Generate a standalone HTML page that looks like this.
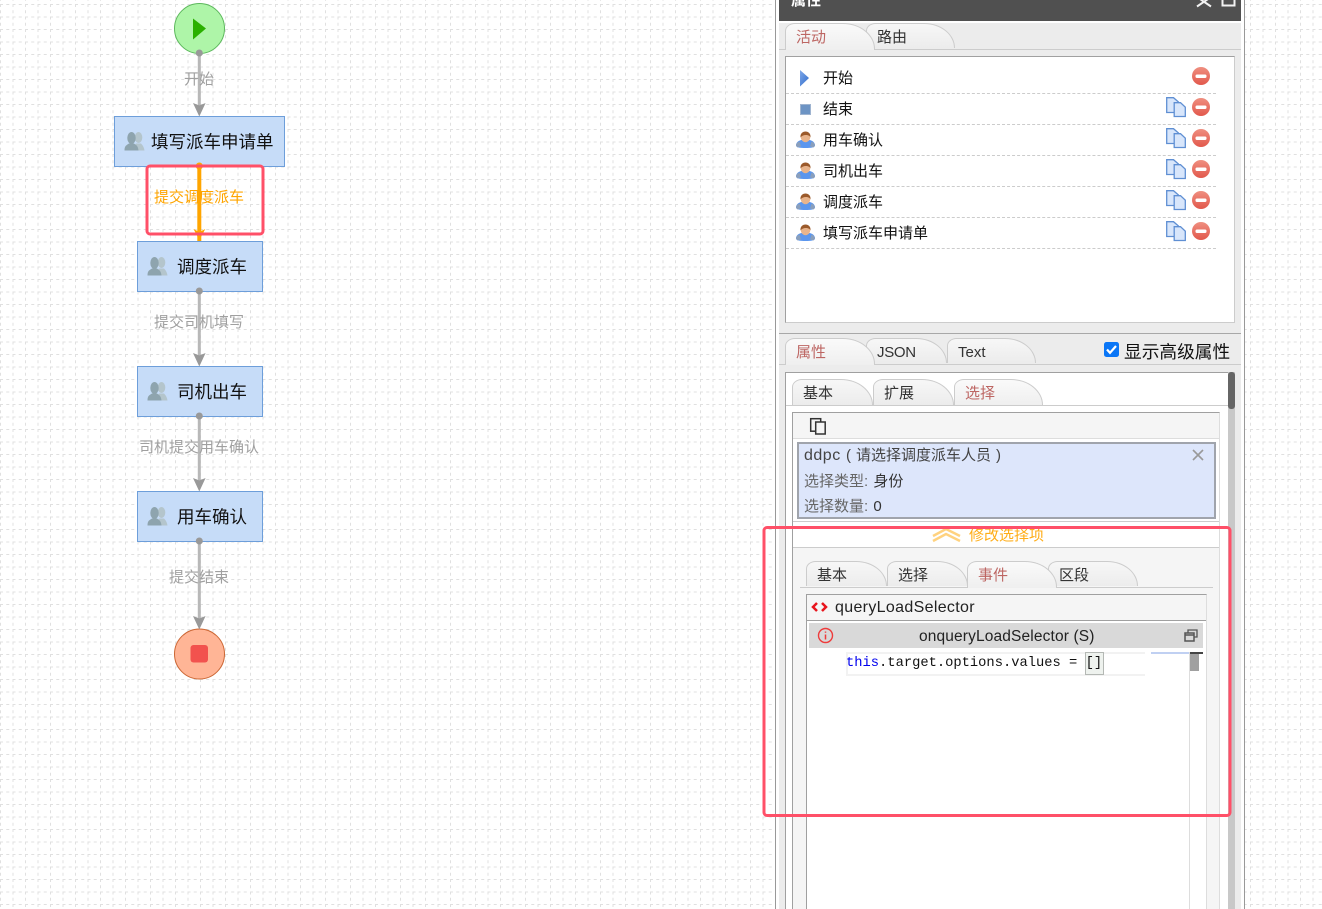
<!DOCTYPE html>
<html><head><meta charset="utf-8">
<style>
html,body{margin:0;padding:0;width:1322px;height:909px;overflow:hidden;background:#fff}
body{position:relative;font-family:"Liberation Sans","Noto Sans CJK SC",sans-serif;color:#333}
.a{position:absolute}
.t{position:absolute;white-space:nowrap;line-height:20px;font-size:15px}
.tab{position:absolute;box-sizing:border-box;background:linear-gradient(#f7f7f7,#ececec);border:1px solid #ccc;border-bottom:0;border-radius:10px 32px 0 0/8px 26px 0 0;font-size:15px;line-height:28px;padding-left:10px;white-space:nowrap;overflow:hidden}
.tab.on{color:#bd6663;background:linear-gradient(#fafafa,#efefef)}
.dash{position:absolute;left:786px;width:430px;height:0;border-top:1px dashed #ccc}
</style></head><body>

<svg class="a" style="left:0;top:0" width="1322" height="909">
<defs>
<pattern id="g" x="0" y="4" width="25" height="25" patternUnits="userSpaceOnUse">
<path d="M0 .5H25M0 13H25M.5 0V25M13 0V25" stroke="#e0e0e0" stroke-width="1" stroke-dasharray="3 3.25" fill="none"/>
</pattern>
<g id="grp"><ellipse cx="14.500" cy="5.500" rx="3.800" ry="5.500" fill="#b4c5cc"/><path d="M10 18.500c1-5 1-6 2-7h5c2 2 3 4 3.500 7z" fill="#b4c5cc"/><ellipse cx="7.500" cy="6" rx="4.200" ry="6" fill="#8ea4ae"/><path d="M.5 18.500c0-4 1-5 4.500-7h5c3 2 4 3 4.500 7z" fill="#8ea4ae"/></g>
</defs>
<rect width="1322" height="909" fill="url(#g)"/>

<circle cx="199.500" cy="28.500" r="25" fill="#aef5a8" stroke="#5cb85c" stroke-width="1"/>
<path d="M193 18.500L206 28.500L193 39.500Z" fill="#2ab000"/>
<circle cx="199.500" cy="654" r="25" fill="#ffb596" stroke="#cc6633" stroke-width="1"/>
<rect x="190.500" y="645" width="17.500" height="17.500" rx="3" fill="#f2524e"/>

<g fill="none" stroke="#b8b8b8" stroke-width="3">
<path d="M199.300 53V106M199.300 292V356M199.300 417V481M199.300 542V619"/>
</g>
<g fill="#999">
<path d="M199.300 116.500L193 103L199.300 105.500L205.600 103Z"/>
<path d="M199.300 366.500L193 353L199.300 355.500L205.600 353Z"/>
<path d="M199.300 491.500L193 478L199.300 480.500L205.600 478Z"/>
<path d="M199.300 629.500L193 616L199.300 618.500L205.600 616Z"/>
</g>

<g fill="#c6dcf8" stroke="#6d9eda">
<rect x="114.500" y="116.500" width="170" height="50"/>
<rect x="137.500" y="241.500" width="125" height="50"/>
<rect x="137.500" y="366.500" width="125" height="50"/>
<rect x="137.500" y="491.500" width="125" height="50"/>
</g>
<use href="#grp" x="124" y="132"/><use href="#grp" x="147" y="257"/><use href="#grp" x="147" y="382"/><use href="#grp" x="147" y="507"/>

<g fill="#999">
<circle cx="199.300" cy="53" r="3.500"/><circle cx="199.300" cy="291" r="3.500"/><circle cx="199.300" cy="416" r="3.500"/><circle cx="199.300" cy="541" r="3.500"/>
</g>
<path d="M199.300 165V241" stroke="#ffa500" stroke-width="4"/>
<circle cx="199.300" cy="166" r="3.500" fill="#ffa500"/>
<path d="M199.300 240L193.500 229L199.300 232L205.300 229Z" fill="#ffa500"/>
</svg>

<div class="t" style="left:184px;top:70px;color:#a0a0a0">开始</div>
<div class="t" style="left:151px;top:132px;font-size:17.500px;color:#111">填写派车申请单</div>
<div class="t" style="left:154px;top:188px;color:#ffa500">提交调度派车</div>
<div class="t" style="left:177px;top:257px;font-size:17.500px;color:#111">调度派车</div>
<div class="t" style="left:154px;top:313px;color:#a0a0a0">提交司机填写</div>
<div class="t" style="left:177px;top:382px;font-size:17.500px;color:#111">司机出车</div>
<div class="t" style="left:139px;top:438px;color:#a0a0a0">司机提交用车确认</div>
<div class="t" style="left:177px;top:507px;font-size:17.500px;color:#111">用车确认</div>
<div class="t" style="left:169px;top:568px;color:#a0a0a0">提交结束</div>

<!-- panel -->
<div class="a" style="left:775px;top:0;width:470px;height:909px;background:#fff;box-sizing:border-box;border-left:1px solid #999;border-right:1px solid #999"></div>
<div class="a" style="left:779px;top:0;width:462px;height:909px;background:#ececec"></div>
<div class="a" style="left:779px;top:0;width:462px;height:21px;background:#505050"></div>
<div class="a" style="left:779px;top:21px;width:462px;height:2px;background:#fff"></div>
<div class="t" style="left:791px;top:-9px;color:#fff;font-weight:bold;font-size:15px">属性</div>
<svg class="a" style="left:1190px;top:0" width="50" height="10"><path d="M7 -3L21 6.500M21 -3L7 6.500" stroke="#f2f2f2" stroke-width="2"/><path d="M32.500 -2V5.500H44.500V-2" stroke="#f2f2f2" stroke-width="2" fill="none"/></svg>

<div class="a" style="left:779px;top:49px;width:462px;height:1px;background:#ccc"></div>
<div class="tab" style="left:866px;top:23px;width:89px;height:25px;">路由</div>
<div class="tab on" style="left:785px;top:23px;width:90px;height:27px;">活动</div>

<div class="a" style="left:785px;top:56px;width:450px;height:267px;background:#fff;box-sizing:border-box;border:1px solid #ccc;border-top-color:#a0a0a0;border-left-color:#a0a0a0"></div>
<div class="dash" style="top:93px"></div><div class="dash" style="top:124px"></div><div class="dash" style="top:155px"></div><div class="dash" style="top:186px"></div><div class="dash" style="top:217px"></div><div class="dash" style="top:248px"></div>

<div class="t" style="left:823px;top:69px;color:#111">开始</div>
<div class="t" style="left:823px;top:100px;color:#111">结束</div>
<div class="t" style="left:823px;top:131px;color:#111">用车确认</div>
<div class="t" style="left:823px;top:162px;color:#111">司机出车</div>
<div class="t" style="left:823px;top:193px;color:#111">调度派车</div>
<div class="t" style="left:823px;top:224px;color:#111">填写派车申请单</div>

<svg class="a" style="left:785px;top:56px" width="450" height="200">
<defs>
<linearGradient id="rd" x1="0" y1="0" x2="0" y2="1"><stop offset="0" stop-color="#ef8f80"/><stop offset="1" stop-color="#e2584c"/></linearGradient>
<linearGradient id="bl" x1="0" y1="0" x2="1" y2="1"><stop offset="0" stop-color="#7fa8e8"/><stop offset="1" stop-color="#2f6ccb"/></linearGradient>
<g id="rm"><circle cx="0" cy="0" r="9" fill="url(#rd)"/><rect x="-5.500" y="-1.500" width="11" height="3.500" rx="1.500" fill="#fff"/></g>
<g id="cp" fill="#d8e6fb" stroke="#5f8fd3" stroke-width="1.300"><path d="M.7.700H7.500L12.500 5V15.500H.7Z"/><path d="M8.200 5.700H14.500L19.300 10.200V19.500H8.200Z"/></g>
<g id="us"><path d="M0 14.500C0 10.500 4 8.500 9.500 8.500S19 10.500 19 14.500C19 16.500 15 17 9.500 17S0 16.500 0 14.500Z" fill="#5b96ee"/><path d="M0 14.500C0 12.500 1.500 11.500 3.500 10.500L5 15.500 1.500 16.500ZM19 14.500C19 12.500 17.500 11.500 15.500 10.500L14 15.500 17.500 16.500Z" fill="#8a9fbc"/><ellipse cx="9.500" cy="6" rx="4.800" ry="5.200" fill="#e8b48c"/><path d="M4.500 6.500C3.500 -1.500 15.500 -1.500 14.500 6.500 13.500 3.500 7 3 4.500 6.500Z" fill="#9b5a2b"/></g>
</defs>
<path d="M15 14L24 22L15 30.500Z" fill="url(#bl)"/>
<rect x="15.500" y="48.500" width="10" height="10" fill="#6d94c4" stroke="#9fb4d0"/>
<use href="#us" x="11" y="75"/><use href="#us" x="11" y="106"/><use href="#us" x="11" y="137"/><use href="#us" x="11" y="168"/>
<use href="#rm" x="416" y="20"/><use href="#rm" x="416" y="51"/><use href="#rm" x="416" y="82"/><use href="#rm" x="416" y="113"/><use href="#rm" x="416" y="144"/><use href="#rm" x="416" y="175"/>
<use href="#cp" x="381" y="41"/><use href="#cp" x="381" y="72"/><use href="#cp" x="381" y="103"/><use href="#cp" x="381" y="134"/><use href="#cp" x="381" y="165"/>
</svg>

<div class="a" style="left:779px;top:333px;width:462px;height:1px;background:#a8a8a8"></div>
<div class="a" style="left:779px;top:364px;width:462px;height:1px;background:#ccc"></div>
<div class="tab" style="left:947px;top:338px;width:89px;height:25px;">Text</div>
<div class="tab" style="left:866px;top:338px;width:81px;height:25px;letter-spacing:-.3px">JSON</div>
<div class="tab on" style="left:785px;top:338px;width:90px;height:27px;">属性</div>
<svg class="a" style="left:1104px;top:342px" width="15" height="15"><rect width="15" height="15" rx="2.500" fill="#0a76f6"/><path d="M3 7.500L6 10.800L12 4" stroke="#fff" stroke-width="2.200" fill="none"/></svg>
<div class="t" style="left:1124px;top:342px;font-size:17.700px;color:#111">显示高级属性</div>

<!-- properties area -->
<div class="a" style="left:785px;top:372px;width:443px;height:547px;background:#fff;box-sizing:border-box;border-left:1px solid #a0a0a0;border-top:1px solid #a0a0a0"></div>
<div class="a" style="left:1228px;top:372px;width:7px;height:537px;background:#c8c8c8"></div>
<div class="a" style="left:1228px;top:372px;width:7px;height:37px;background:#666;border-radius:3px"></div>
<div class="a" style="left:786px;top:405px;width:442px;height:1px;background:#ccc"></div>
<div class="tab" style="left:792px;top:379px;width:81px;height:26px;">基本</div>
<div class="tab" style="left:873px;top:379px;width:81px;height:26px;">扩展</div>
<div class="tab on" style="left:954px;top:379px;width:89px;height:26px;">选择</div>

<div class="a" style="left:792px;top:412px;width:428px;height:507px;background:#f5f5f5;box-sizing:border-box;border:1px solid #ddd;border-top-color:#a0a0a0;border-left-color:#a0a0a0"></div>
<div class="a" style="left:793px;top:438px;width:426px;height:1px;background:#ddd"></div>
<div class="a" style="left:793px;top:439px;width:426px;height:82px;background:#fff"></div>
<div class="a" style="left:793px;top:521px;width:426px;height:1px;background:#ccc"></div>
<div class="a" style="left:793px;top:522px;width:426px;height:25px;background:#fff"></div>
<div class="a" style="left:793px;top:547px;width:426px;height:1px;background:#ccc"></div>
<svg class="a" style="left:808px;top:416px" width="20" height="20"><rect x="2.700" y="2.700" width="10" height="12.500" fill="none" stroke="#333" stroke-width="1.500"/><rect x="7.700" y="6" width="9.500" height="12" fill="#f5f5f5" stroke="#333" stroke-width="1.500"/></svg>

<div class="a" style="left:797px;top:442px;width:419px;height:77px;box-sizing:border-box;background:#dde6fb;border:2px solid #a0a4ac"></div>
<div class="t" style="left:804px;top:446px;color:#444;font-size:16px;letter-spacing:.5px">ddpc</div>
<div class="t" style="left:846px;top:446px;color:#444">(</div>
<div class="t" style="left:856px;top:446px;color:#444">请选择调度派车人员</div>
<div class="t" style="left:996px;top:446px;color:#444">)</div>
<svg class="a" style="left:1190px;top:447px" width="16" height="16"><path d="M3 3L13 13M13 3L3 13" stroke="#999" stroke-width="1.600"/></svg>
<div class="t" style="left:804px;top:472px;color:#666">选择类型: <span style="color:#333;margin-left:1px">身份</span></div>
<div class="t" style="left:804px;top:497px;color:#666">选择数量: <span style="color:#333;margin-left:1px">0</span></div>

<svg class="a" style="left:931px;top:526px" width="32" height="17"><path d="M2 10L15 3L29 10M2 15L15 8L29 15" stroke="#ffd27f" stroke-width="2.500" fill="none"/></svg>
<div class="t" style="left:969px;top:526px;color:#ffa500;opacity:.9">修改选择项</div>

<div class="a" style="left:800px;top:587px;width:413px;height:1px;background:#ccc"></div>
<div class="tab" style="left:806px;top:561px;width:81px;height:25px;">基本</div>
<div class="tab" style="left:887px;top:561px;width:81px;height:25px;">选择</div>
<div class="tab" style="left:1048px;top:561px;width:90px;height:25px;">区段</div>
<div class="tab on" style="left:967px;top:561px;width:90px;height:27px;">事件</div>

<div class="a" style="left:806px;top:594px;width:401px;height:325px;box-sizing:border-box;background:#fff;border:1px solid #ddd;border-top-color:#a0a0a0;border-left-color:#a0a0a0"></div>
<div class="a" style="left:807px;top:595px;width:399px;height:25px;background:#f5f5f5;border-bottom:1px solid #a0a0a0"></div>
<svg class="a" style="left:811px;top:601px" width="18" height="12"><path d="M6 2L2 6L6 10M11 2L15 6L11 10" stroke="#e8141c" stroke-width="2.500" fill="none"/></svg>
<div class="t" style="left:835px;top:598px;font-size:16px;color:#222;letter-spacing:.33px">queryLoadSelector</div>
<div class="a" style="left:809px;top:623px;width:394px;height:25px;background:#d9d9d9"></div>
<svg class="a" style="left:817px;top:627px" width="18" height="18"><circle cx="8.500" cy="8.500" r="7" fill="none" stroke="#ee3b3b" stroke-width="1.400"/><path d="M8.500 4.500V5.800M8.500 7.500V12.500" stroke="#ee3b3b" stroke-width="1.500"/></svg>
<div class="t" style="left:919px;top:627px;font-size:15.500px;color:#222;letter-spacing:.14px">onqueryLoadSelector (S)</div>
<svg class="a" style="left:1183px;top:628px" width="16" height="16"><path d="M5 4.500V2H14V9H11" fill="none" stroke="#555" stroke-width="1.300"/><rect x="2" y="5" width="9" height="8" fill="none" stroke="#555" stroke-width="1.500"/><path d="M2 7H11" stroke="#555" stroke-width="1.500"/></svg>

<div class="a" style="left:846px;top:652px;width:297px;height:20px;border-top:2px solid #f2f2f2;border-bottom:2px solid #f2f2f2;border-left:2px solid #f2f2f2"></div>
<div class="a" style="left:1085px;top:652px;width:17px;height:21px;background:#eef2ee;border:1px solid #b4b8b4"></div>
<div class="a" style="left:846px;top:654px;font:13.770px/20px 'Liberation Mono',monospace;white-space:pre;color:#111"><span style="color:#0000ee">this</span>.target.options.values = []</div>
<div class="a" style="left:1151px;top:652px;width:38px;height:1.500px;background:#c0d0f2"></div>
<div class="a" style="left:1189px;top:652px;width:1px;height:257px;background:#ddd"></div>
<div class="a" style="left:1190px;top:652px;width:13px;height:2px;background:#444"></div>
<div class="a" style="left:1190px;top:654px;width:9px;height:17px;background:#a0a0a0"></div>

<svg class="a" style="left:0;top:0;pointer-events:none" width="1322" height="909"><rect x="764" y="527.500" width="466" height="288" rx="3" fill="none" stroke="#ff5068" stroke-width="3"/><rect x="147" y="166" width="116" height="68" rx="3" fill="none" stroke="#ff5068" stroke-width="3"/></svg>
</body></html>
